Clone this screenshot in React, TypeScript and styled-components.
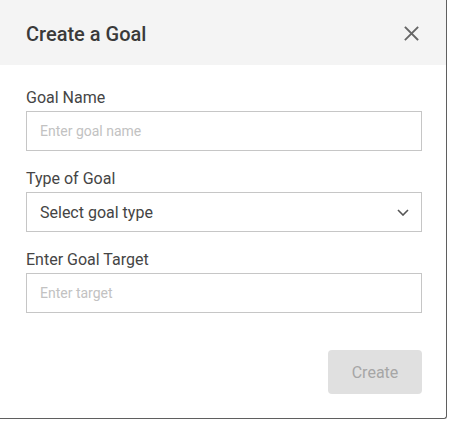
import React from "react";
import styled, { createGlobalStyle } from "styled-components";

const Global = createGlobalStyle`
  html, body { margin: 0; padding: 0; background: #ffffff; }
  body { font-family: Roboto, "Liberation Sans", Arial, sans-serif; }
  * { box-sizing: border-box; }
`;

const Dialog = styled.div`
  width: 447px;
  height: 419px;
  background: #ffffff;
  border-right: 1px solid #5f5f5f;
  border-bottom: 1px solid #5f5f5f;
  border-bottom-right-radius: 3px;
  display: flex;
  flex-direction: column;
`;

const Header = styled.div`
  height: 65px;
  background: #f4f4f4;
  display: flex;
  align-items: center;
  justify-content: space-between;
  padding: 2px 27px 0 26px;
`;

const Title = styled.h2`
  margin: 0;
  font-size: 20px;
  font-weight: 500;
  color: #3a3a3a;
  line-height: 24px;
`;

const CloseButton = styled.button`
  border: 0;
  background: transparent;
  padding: 0;
  width: 15px;
  height: 15px;
  display: flex;
  cursor: pointer;
`;

const Body = styled.div`
  flex: 1;
  display: flex;
  flex-direction: column;
  padding: 23px 24px 24px 26px;
`;

const Fields = styled.div`
  display: flex;
  flex-direction: column;
  gap: 18px;
`;

const Field = styled.div`
  display: flex;
  flex-direction: column;
  gap: 4px;
`;

const Label = styled.label`
  font-size: 16px;
  line-height: 19px;
  color: #454545;
`;

const Input = styled.input`
  height: 40px;
  width: 100%;
  border: 1px solid #c6c6c6;
  border-radius: 0;
  padding: 0 13px;
  font-family: inherit;
  font-size: 14px;
  color: #444;
  outline: none;
  &::placeholder { color: #c2c2c2; }
`;

const SelectBox = styled.div`
  height: 40px;
  border: 1px solid #c6c6c6;
  display: flex;
  align-items: center;
  justify-content: space-between;
  padding: 0 12px 0 13px;
  font-size: 16px;
  color: #444;
`;

const Footer = styled.div`
  margin-top: auto;
  display: flex;
  justify-content: flex-end;
`;

const CreateButton = styled.button`
  width: 94px;
  height: 44px;
  border: 0;
  border-radius: 4px;
  background: #e0e0e0;
  color: #a6a6a6;
  font-family: inherit;
  font-size: 16px;
  cursor: not-allowed;
`;

export default function App() {
  return (
    <>
      <Global />
      <Dialog>
        <Header>
          <Title>Create a Goal</Title>
          <CloseButton aria-label="Close">
            <svg width="15" height="15" viewBox="0 0 15 15">
              <path d="M1.5 1.5L13.5 13.5M13.5 1.5L1.5 13.5" stroke="#666" strokeWidth="1.8" strokeLinecap="square" />
            </svg>
          </CloseButton>
        </Header>
        <Body>
          <Fields>
            <Field>
              <Label>Goal Name</Label>
              <Input placeholder="Enter goal name" />
            </Field>
            <Field>
              <Label>Type of Goal</Label>
              <SelectBox>
                <span>Select goal type</span>
                <svg width="12" height="7" viewBox="0 0 12 7">
                  <path d="M1 1L6 6L11 1" fill="none" stroke="#555" strokeWidth="1.6" />
                </svg>
              </SelectBox>
            </Field>
            <Field>
              <Label>Enter Goal Target</Label>
              <Input placeholder="Enter target" />
            </Field>
          </Fields>
          <Footer>
            <CreateButton disabled>Create</CreateButton>
          </Footer>
        </Body>
      </Dialog>
    </>
  );
}
